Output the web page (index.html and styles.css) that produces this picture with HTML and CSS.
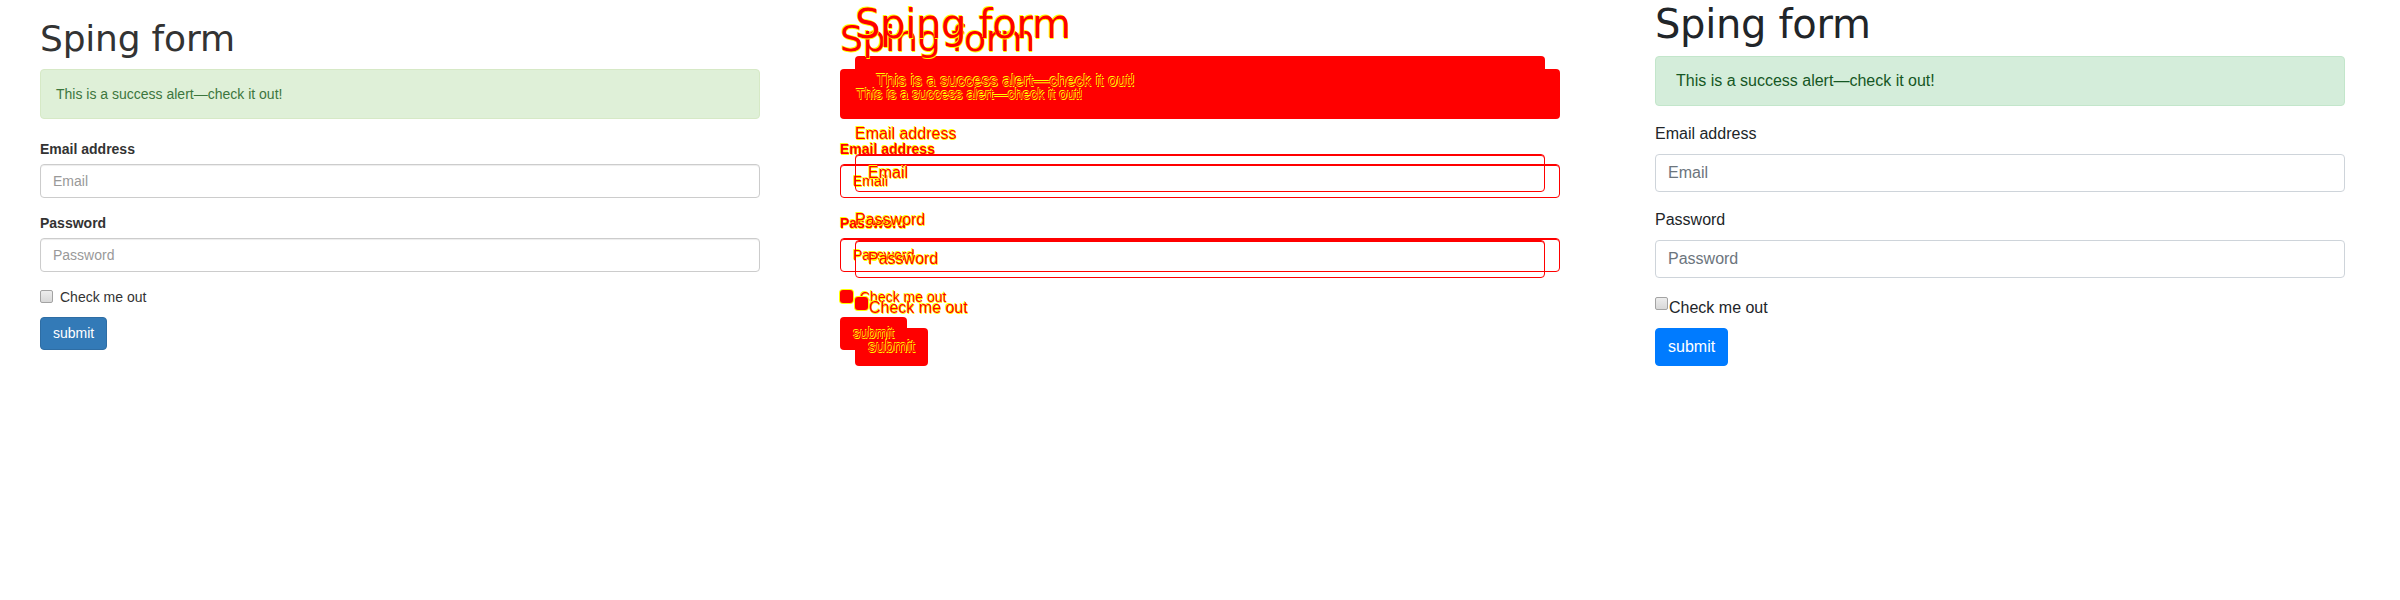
FILE: index.html
```html
<!DOCTYPE html>
<html lang="en">
<head>
<meta charset="utf-8">
<title>Sping form</title>
<link rel="stylesheet" href="styles.css">
</head>
<body>
<div class="page">
  <section class="col">
    <div class="bs3">
      <h1 class="title">Sping form</h1>
      <div class="alert">This is a success alert—check it out!</div>
      <form class="form">
        <div class="group">
          <label class="lbl">Email address</label>
          <input class="input" type="email" placeholder="Email">
        </div>
        <div class="group">
          <label class="lbl">Password</label>
          <input class="input" type="password" placeholder="Password">
        </div>
        <div class="checkbox"><label class="chk"><input class="cb" type="checkbox">Check me out</label></div>
        <button class="btn" type="button">submit</button>
      </form>
    </div>
  </section>

  <section class="col diff">
    <div class="bs3 ghost">
      <div class="title">Sping form</div>
      <div class="alert"><span class="txt">This is a success alert—check it out!</span></div>
      <div class="form">
        <div class="group">
          <span class="lbl">Email address</span>
          <div class="input"><span class="ph">Email</span></div>
        </div>
        <div class="group">
          <span class="lbl">Password</span>
          <div class="input"><span class="ph">Password</span></div>
        </div>
        <div class="checkbox"><span class="chk"><span class="cb"></span>Check me out</span></div>
        <div class="btn"><span class="txt">submit</span></div>
      </div>
    </div>
    <div class="bs4 ghost">
      <div class="title">Sping form</div>
      <div class="alert"><span class="txt">This is a success alert—check it out!</span></div>
      <div class="form">
        <div class="group">
          <span class="lbl">Email address</span>
          <div class="input"><span class="ph">Email</span></div>
        </div>
        <div class="group">
          <span class="lbl">Password</span>
          <div class="input"><span class="ph">Password</span></div>
        </div>
        <div class="check"><span class="cb"></span><span class="lbl">Check me out</span></div>
        <div class="btn"><span class="txt">submit</span></div>
      </div>
    </div>
  </section>

  <section class="col">
    <div class="bs4">
      <h1 class="title">Sping form</h1>
      <div class="alert">This is a success alert—check it out!</div>
      <form class="form">
        <div class="group">
          <label class="lbl">Email address</label>
          <input class="input" type="email" placeholder="Email">
        </div>
        <div class="group">
          <label class="lbl">Password</label>
          <input class="input" type="password" placeholder="Password">
        </div>
        <div class="check"><input class="cb" type="checkbox"><label class="lbl">Check me out</label></div>
        <button class="btn" type="button">submit</button>
      </form>
    </div>
  </section>
</div>
</body>
</html>
```

FILE: styles.css
```css
*, *::before, *::after {
  box-sizing: border-box;
}

html, body {
  margin: 0;
  padding: 0;
  background: #fff;
}

.page {
  display: flex;
  width: 2400px;
  height: 600px;
}

.col {
  flex: none;
  width: 800px;
  height: 600px;
}

.form {
  margin: 0;
}

/* native-looking grey checkbox */
.cb {
  appearance: none;
  -webkit-appearance: none;
  display: inline-block;
  width: 13px;
  height: 13px;
  padding: 0;
  border: 1px solid #a3a3a3;
  border-radius: 2px;
  background: linear-gradient(#ededed, #d8d8d8);
}

/* ---------- Bootstrap 3 look ---------- */
.bs3 {
  width: 750px;
  margin: 0 auto;
  padding: 0 15px;
  font-family: "Liberation Sans", Arial, sans-serif;
  font-size: 14px;
  line-height: 20px;
  color: #333;
}

.bs3 .title {
  margin: 19px 0 10px;
  font-family: "DejaVu Sans", sans-serif;
  font-size: 36px;
  font-weight: 400;
  line-height: 1.1;
  letter-spacing: -0.2px;
  color: #333;
}

.bs3 .alert {
  padding: 15px;
  margin-bottom: 20px;
  border: 1px solid #d6e9c6;
  border-radius: 4px;
  background: #dff0d8;
  color: #3c763d;
  line-height: 18px;
}

.bs3 .group {
  margin-bottom: 15px;
}

.bs3 .lbl {
  display: inline-block;
  margin-bottom: 5px;
  font-weight: 700;
}

.bs3 .input {
  display: block;
  width: 100%;
  height: 34px;
  padding: 6px 12px;
  font-family: "Liberation Sans", Arial, sans-serif;
  font-size: 14px;
  line-height: 20px;
  color: #555;
  background: #fff;
  border: 1px solid #ccc;
  border-radius: 4px;
  box-shadow: inset 0 1px 1px rgba(0, 0, 0, .075);
}

.bs3 .input::placeholder {
  color: #999;
}

.bs3 .checkbox {
  margin: 9px 0;
  min-height: 20px;
}

.bs3 .chk {
  display: inline-flex;
  align-items: flex-start;
  min-height: 20px;
  font-weight: 400;
}

.bs3 .cb {
  flex: none;
  margin: 3px 7px 0 0;
}

.bs3 .btn {
  display: inline-block;
  padding: 6px 12px;
  font-family: "Liberation Sans", Arial, sans-serif;
  font-size: 14px;
  line-height: 19px;
  color: #fff;
  background: #337ab7;
  border: 1px solid #2e6da4;
  border-radius: 4px;
}

/* ---------- Bootstrap 4 look ---------- */
.bs4 {
  width: 720px;
  margin: 0 auto;
  padding: 0 15px;
  font-family: "Liberation Sans", Arial, sans-serif;
  font-size: 16px;
  line-height: 24px;
  color: #212529;
}

.bs4 .title {
  margin: 0 0 8px;
  font-family: "DejaVu Sans", sans-serif;
  font-size: 40px;
  font-weight: 400;
  line-height: 1.2;
  letter-spacing: -0.3px;
  color: #212529;
}

.bs4 .alert {
  padding: 12px 20px;
  margin-bottom: 16px;
  border: 1px solid #c3e6cb;
  border-radius: 4px;
  background: #d4edda;
  color: #155724;
}

.bs4 .group {
  margin-bottom: 16px;
}

.bs4 .lbl {
  display: inline-block;
  margin-bottom: 8px;
}

.bs4 .input {
  display: block;
  width: 100%;
  height: 38px;
  padding: 6px 12px;
  font-family: "Liberation Sans", Arial, sans-serif;
  font-size: 16px;
  line-height: 24px;
  color: #495057;
  background: #fff;
  border: 1px solid #ced4da;
  border-radius: 4px;
}

.bs4 .input::placeholder {
  color: #6c757d;
}

.bs4 .cb {
  margin: 3px 1px 3px 0;
}

.bs4 .btn {
  display: inline-block;
  padding: 6px 12px;
  font-family: "Liberation Sans", Arial, sans-serif;
  font-size: 16px;
  line-height: 24px;
  color: #fff;
  background: #007bff;
  border: 1px solid #007bff;
  border-radius: 4px;
}

/* ---------- Diff overlay ---------- */
.diff {
  display: grid;
  align-content: start;
  isolation: isolate;
}

.diff > .bs3,
.diff > .bs4 {
  grid-area: 1 / 1;
}

.ghost {
  color: #f00;
  text-shadow: -0.6px -0.6px 0 #ff0, 0.6px 0.6px 0 #ff0;
}

.ghost .title,
.ghost .lbl,
.ghost .ph {
  color: #f00;
}

.ghost .alert,
.ghost .btn {
  position: relative;
  background: none;
  border-color: transparent;
  color: #f00;
}

.ghost .alert::before,
.ghost .btn::before {
  content: "";
  position: absolute;
  inset: -1px;
  border-radius: 4px;
  background: #f00;
  z-index: -1;
}

.ghost .input {
  background: none;
  border-color: #f00;
  box-shadow: inset 0 1px 0 #f00;
}

.ghost .cb {
  background: #f00;
  border: 0;
  border-radius: 3px;
  box-shadow: 0 0 0 1px #ff0;
}
```
